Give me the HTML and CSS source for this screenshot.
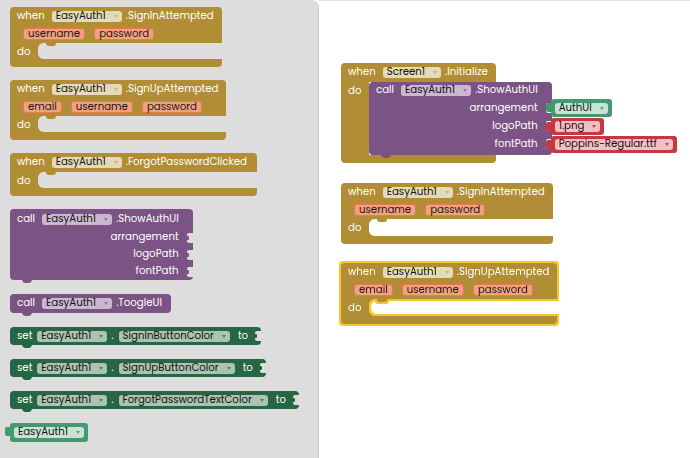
FILE: index.html
```html
<!DOCTYPE html>
<html>
<head>
<meta charset="utf-8">
<link rel="stylesheet" href="styles.css">
</head>
<body>
<svg class="defs" width="0" height="0">
  <filter id="sel" x="-5%" y="-5%" width="110%" height="110%">
    <feMorphology in="SourceAlpha" operator="dilate" radius="1.6" result="d"/>
    <feFlood flood-color="#f7c52f"/>
    <feComposite in2="d" operator="in" result="o"/>
    <feMerge><feMergeNode in="o"/><feMergeNode in="SourceGraphic"/></feMerge>
  </filter>
</svg>

<div class="flyout">
  <div class="evt">
    <div class="row head">when <span class="dd dd-evt">EasyAuth1<i></i></span> .SignInAttempted</div>
    <div class="row params"><span class="pill">username</span><span class="pill">password</span></div>
    <div class="dorow"><span class="dolabel">do</span><span class="slot"></span></div>
    <div class="foot"></div>
  </div>

  <div class="evt">
    <div class="row head">when <span class="dd dd-evt">EasyAuth1<i></i></span> .SignUpAttempted</div>
    <div class="row params"><span class="pill">email</span><span class="pill">username</span><span class="pill">password</span></div>
    <div class="dorow"><span class="dolabel">do</span><span class="slot"></span></div>
    <div class="foot"></div>
  </div>

  <div class="evt">
    <div class="row head wide">when <span class="dd dd-evt">EasyAuth1<i></i></span> .ForgotPasswordClicked</div>
    <div class="dorow"><span class="dolabel">do</span><span class="slot"></span></div>
    <div class="foot"></div>
  </div>

  <div class="call">
    <div class="chead">call <span class="dd dd-call">EasyAuth1<i></i></span> .ShowAuthUI</div>
    <div class="arg"><span>arrangement</span><span class="sock"></span></div>
    <div class="arg"><span>logoPath</span><span class="sock"></span></div>
    <div class="arg"><span>fontPath</span><span class="sock"></span></div>
  </div>

  <div class="call small">
    <div class="chead">call <span class="dd dd-call">EasyAuth1<i></i></span> .ToogleUI</div>
  </div>

  <div class="set">set <span class="dd dd-set">EasyAuth1<i></i></span> . <span class="dd dd-set">SignInButtonColor<i></i></span> <span class="to">to</span><span class="sock"></span></div>
  <div class="set">set <span class="dd dd-set">EasyAuth1<i></i></span> . <span class="dd dd-set">SignUpButtonColor<i></i></span> <span class="to">to</span><span class="sock"></span></div>
  <div class="set">set <span class="dd dd-set">EasyAuth1<i></i></span> . <span class="dd dd-set">ForgotPasswordTextColor<i></i></span> <span class="to">to</span><span class="sock"></span></div>

  <div class="val green getter"><span class="dd dd-green">EasyAuth1<i></i></span></div>
</div>

<div class="workspace">
  <div class="evt init">
    <div class="row head">when <span class="dd dd-evt">Screen1<i></i></span> .Initialize</div>
    <div class="dorow big"><span class="dolabel">do</span>
      <span class="inner">
        <div class="call ws">
          <div class="chead">call <span class="dd dd-call">EasyAuth1<i></i></span> .ShowAuthUI</div>
          <div class="arg"><span>arrangement</span><span class="sock"></span><span class="attach"><span class="val green"><span class="dd dd-green">AuthUI<i></i></span></span></span></div>
          <div class="arg"><span>logoPath</span><span class="sock"></span><span class="attach"><span class="val red"><span class="dd dd-red">1.png<i></i></span></span></span></div>
          <div class="arg"><span>fontPath</span><span class="sock"></span><span class="attach"><span class="val red"><span class="dd dd-red">Poppins-Regular.ttf<i></i></span></span></span></div>
        </div>
      </span>
    </div>
    <div class="foot"></div>
  </div>

  <div class="evt ws-in">
    <div class="row head">when <span class="dd dd-evt">EasyAuth1<i></i></span> .SignInAttempted</div>
    <div class="row params"><span class="pill">username</span><span class="pill">password</span></div>
    <div class="dorow"><span class="dolabel">do</span><span class="slot"></span></div>
    <div class="foot"></div>
  </div>

  <div class="evt ws-up selected">
    <div class="row head">when <span class="dd dd-evt">EasyAuth1<i></i></span> .SignUpAttempted</div>
    <div class="row params"><span class="pill">email</span><span class="pill">username</span><span class="pill">password</span></div>
    <div class="dorow"><span class="dolabel">do</span><span class="slot"></span></div>
    <div class="foot"></div>
  </div>
</div>
</body>
</html>
```

FILE: styles.css
```css
* { box-sizing: border-box; }
body {
  margin: 0;
  width: 690px;
  height: 458px;
  overflow: hidden;
  display: flex;
  background: #fff;
  font-family: "Poppins", "Inter", "Open Sans", sans-serif;
  font-size: 10.2px;
  line-height: 1;
  color: #fff;
}
.defs { position: absolute; }

.flyout {
  width: 319px;
  height: 458px;
  flex-shrink: 0;
  background: #dddddd;
  border-right: 1px solid #c9c9c9;
  border-top-right-radius: 8px;
  padding: 7px 0 0 10px;
  display: flex;
  flex-direction: column;
  align-items: flex-start;
  gap: 13px;
  --bg: #dddddd;
}
.workspace {
  flex: 1;
  position: relative;
  border-top: 1px solid #e2e2e2;
  --bg: #ffffff;
}

/* ---------- event blocks ---------- */
.evt { display: flex; flex-direction: column; flex-shrink: 0; }
.evt .row {
  background: #b18e35;
  display: flex;
  align-items: center;
  white-space: nowrap;
}
.evt .head { height: 18px; padding: 0 8px 0 7px; border-radius: 4px 4px 0 0; }
.evt .head.wide { height: 19px; padding-right: 10px; }
.evt .head .dd { margin: 0 4px 0 7px; }
.evt .params { height: 18px; padding-left: 13px; gap: 9px; }
.dorow { display: flex; height: 16px; }
.dolabel {
  background: #b18e35;
  width: 28px;
  padding: 4px 0 0 7px;
  position: relative;
  flex-shrink: 0;
}
.dolabel::before, .dolabel::after {
  content: "";
  position: absolute;
  right: -5px;
  width: 5px;
  height: 5px;
}
.dolabel::before { top: 0; background: radial-gradient(circle at 100% 100%, transparent 4.5px, #b18e35 5px); }
.dolabel::after { bottom: 0; background: radial-gradient(circle at 100% 0, transparent 4.5px, #b18e35 5px); }
.slot { flex: 1; position: relative; }
.slot::before {
  content: "";
  position: absolute;
  left: 8px;
  top: 0;
  width: 10px;
  height: 3px;
  background: #b18e35;
  border-radius: 0 0 4px 4px;
}
.evt .foot { background: #b18e35; height: 8px; border-radius: 0 0 4px 4px; }

/* ---------- pills and dropdowns ---------- */
.pill {
  background: #f2a07d;
  border: 1px solid #e07c59;
  border-radius: 3px;
  color: #1a1a1a;
  height: 12px;
  padding: 0 4px;
  display: inline-flex;
  align-items: center;
}
.dd {
  display: inline-flex;
  align-items: center;
  gap: 6px;
  height: 11px;
  padding: 0 4px 0 4px;
  border-radius: 3px;
  color: #111;
  white-space: nowrap;
}
.dd i {
  width: 0;
  height: 0;
  border-left: 2.5px solid transparent;
  border-right: 2.5px solid transparent;
  border-top: 3.5px solid #fff;
  margin-left: 2px;
}
.dd-evt { background: #e5dab8; }
.dd-evt i { border-top-color: #c9b47d; }
.dd-call { background: #cbb7cf; }
.dd-call i { border-top-color: #9a7aa2; }
.dd-set { background: #a9c4b3; }
.dd-set i { border-top-color: #4d7f62; }
.dd-green { background: #c9e2d3; }
.dd-green i { border-top-color: #58a77f; }
.dd-red { background: #f2c0c3; }
.dd-red i { border-top-color: #c8424a; }

/* ---------- procedure call ---------- */
.call {
  background: #7c5385;
  border-radius: 4px;
  display: flex;
  flex-direction: column;
  flex-shrink: 0;
  position: relative;
  white-space: nowrap;
  width: max-content;
}
.call::after, .set::after {
  content: "";
  position: absolute;
  left: 12px;
  bottom: -3px;
  width: 10px;
  height: 4px;
  border-radius: 0 0 4px 4px;
  background: inherit;
}
.chead { display: flex; align-items: center; height: 20px; padding: 0 14px 0 7px; }
.chead .dd { margin: 0 4px 0 7px; }
.call.small .chead { height: 19px; padding-right: 9px; }
.call.small { margin-top: 1px; }
.arg {
  display: flex;
  justify-content: flex-end;
  align-items: center;
  height: 17px;
}
.call.ws .chead { height: 17px; }
.call.ws .arg { height: 18px; }
.call.ws .arg:last-child { margin-bottom: 2px; }
.sock {
  position: relative;
  width: 6px;
  height: 10px;
  margin-left: 8px;
  background: var(--bg);
  border-radius: 2px 0 0 2px;
}
.sock::after {
  content: "";
  position: absolute;
  left: 0;
  top: 3px;
  width: 2px;
  height: 4px;
  background: #7c5385;
  border-radius: 0 1px 1px 0;
}
.attach { width: 0; display: flex; align-items: center; }

/* ---------- setter ---------- */
.set {
  background: #266643;
  border-radius: 4px;
  display: flex;
  align-items: center;
  height: 18px;
  padding-left: 7px;
  position: relative;
  white-space: nowrap;
  margin-top: 1px;
}
.set .dd { margin: 0 4px 0 5px; }
.set .to { margin-left: 4px; }
.set .sock { margin-left: 7px; }
.set .sock::after { background: #266643; }

/* ---------- value blocks ---------- */
.val {
  display: flex;
  align-items: center;
  height: 18px;
  padding: 0 4px 0 4px;
  border-radius: 3px;
  position: relative;
  flex-shrink: 0;
}
.val::before {
  content: "";
  position: absolute;
  left: -5px;
  top: 4px;
  width: 5px;
  height: 9px;
  border-radius: 2px 0 0 2px;
  background: inherit;
}
.val.green { background: #439970; }
.val.red { background: #c4393f; height: 17px; }
.getter { margin-left: 0; margin-top: 1px; height: 19px; }
.attach .val { margin-left: -1px; }

/* ---------- workspace placement ---------- */
.workspace .evt { position: absolute; left: 22px; }
.init { top: 62px; }
.init .head { height: 19px; }
.dorow.big { height: auto; }
.dorow.big .dolabel { padding-top: 4px; }
.dorow.big .dolabel::before, .dorow.big .dolabel::after { display: none; }
.inner { width: 0; display: block; }
.ws-in { top: 182px; }
.ws-in .dorow, .ws-up .dorow { height: 17px; }
.ws-up { top: 262px; }
.selected { filter: url(#sel); }
```
